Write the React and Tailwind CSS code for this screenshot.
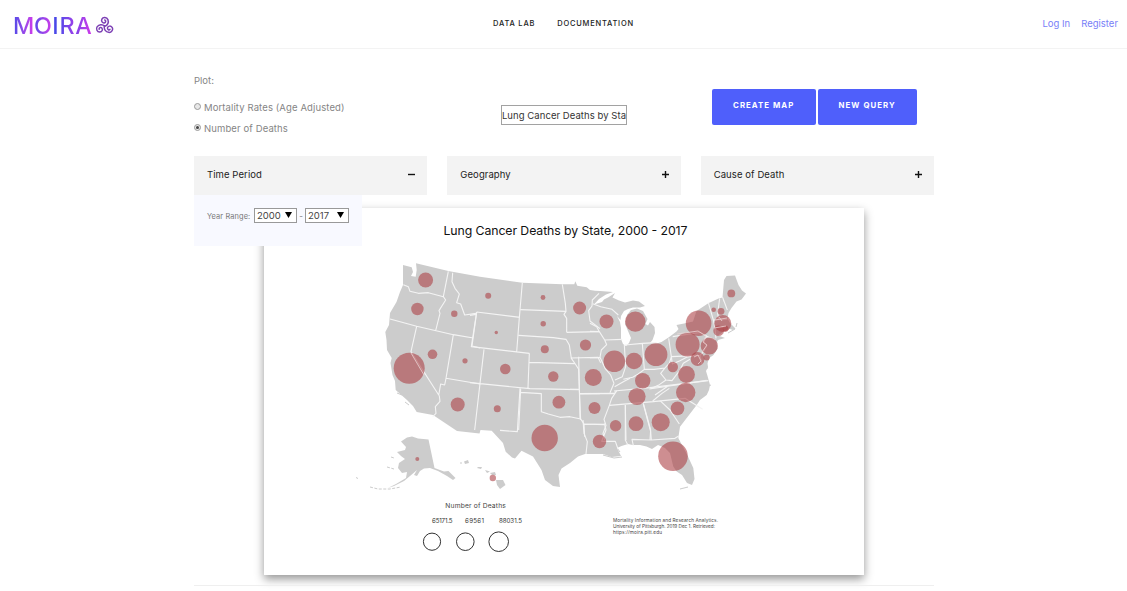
import React from "react";

const LETTERS = [
  ["M", "bg-linear-to-r from-[#4a48e8] to-[#d336ea]", "w-[21px]"],
  ["O", "bg-linear-to-r from-[#5046e8] to-[#d336ea]", "w-[18px]"],
  ["I", "bg-linear-to-r from-[#4a48e8] to-[#4a48e8]", "w-[7px]"],
  ["R", "bg-linear-to-r from-[#4a48e8] to-[#a03cea]", "w-[16px]"],
  ["A", "bg-linear-to-r from-[#7a40e8] to-[#d336ea]", "w-[17px]"],
];

const BUBBLES = [
  [425.6, 280, 7.5], [417.4, 309, 6.2], [454.3, 313.8, 3.2], [488.2, 295.8, 3],
  [409.2, 368.3, 15.5], [432.5, 354.3, 4.8], [465, 360.8, 2.6], [496.3, 332.5, 1.7],
  [505.3, 369, 5.3], [457.7, 404.5, 7], [497.3, 408.8, 3.5], [543, 297.5, 2.4],
  [543.2, 323.7, 2.7], [544.8, 349.3, 4], [553.3, 376.5, 5.2], [558.9, 402.2, 6.4],
  [544.7, 438, 13.2], [579.6, 308, 6.5], [585.5, 345, 5.6], [593.3, 377.4, 8.5],
  [594.5, 408, 6], [599.5, 441.5, 6.7], [606.5, 321.5, 7], [635.3, 321.6, 10.2],
  [614.3, 361.3, 10.8], [634, 361, 8.3], [656, 354.6, 11.4], [642.7, 380.8, 7.7],
  [637, 396.5, 8.6], [615.6, 425.8, 5.7], [636, 423.7, 7.4], [660.7, 422.2, 9],
  [673, 456.2, 14.8], [677.5, 408.4, 6.8], [685.7, 392.5, 9.7], [686.5, 374.5, 8.4],
  [672.8, 367, 5.2], [687.6, 344.4, 12], [698.6, 323.2, 12.8], [709.3, 346, 8.6],
  [697.6, 359, 6.9], [706.7, 357.6, 3], [718.6, 330.8, 5.3], [722.8, 323.6, 8.5],
  [725.5, 328.7, 3], [721, 311.3, 3.4], [713.7, 309.7, 2.3], [731.3, 293.4, 3.9],
  [417.3, 459, 2], [492.8, 478, 3.2],
];

const LEGEND = [
  [432, 541.7, 8.6, 432, 20.5, "65171.5"],
  [465.3, 541.7, 8.8, 465, 19, "69561"],
  [498.7, 541.7, 9.8, 499, 23, "88031.5"],
];

function Triskele() {
  return (
    <svg className="mb-px h-[18px] w-[19px]" viewBox="0 0 19 18" fill="none" stroke="#7c3fb4" strokeWidth="1.500" strokeLinecap="round">
      <g id="arm">
        <path d="M9.600 10.400C12.800 9.400 14 6.200 12.900 3.600C11.800 1 8 .8 6.900 3.100C5.900 5.300 7.500 7.200 9.300 6.900C11 6.500 11.200 4.300 9.700 4" />
      </g>
      <use href="#arm" transform="rotate(120 9.600 10.200)" />
      <use href="#arm" transform="rotate(240 9.600 10.200)" />
    </svg>
  );
}

function Land() {
  return (
    <g fill="#cccccc">
      <path d="M403 265L411.700 267.300L413 272L411 276L415.700 276.700L416.700 270L416 263.300L448.300 271L480 276.700L522.300 282.700L562.300 284.300L574.300 284.300L575.300 281.300L577.300 285.700L586.700 287.300L590 290L595 290.700L600 291L613 292L606 294.500L599 299L594 304.500L602 302L604 299.500L608 297.500L615 293L612.500 297.500L619 300.500L625 302.500L633 300.500L639 301.500L645 306L640 307.500L633 307.500L628 309L624 311L621 316L620.500 320L617 316L620 322L621 328L621 339L623 344L626 346L629 343L631 338L628 331L625 324L627 315L631 310L637 308.500L643 311L647.500 319L645.500 324L648 325.500L650 322L654.500 327L655 333L652.500 340L650 343L656.700 343.500L661.500 342L668.500 337.500L676.500 331.500L678.500 329L676.500 325L686.500 323L693 321.500L696.500 311L708.300 303.300L718.500 298.500L722.500 297.500L724 280L726.500 276L735 275.500L738.500 285L742 290.500L746 293.500L741.500 299.500L736.500 301.500L731.500 308L728.500 313L727.500 318.500L730 323L735.500 328.500L733 330L728.500 328.500L723 332L718 335.500L725 338L718 340L716.500 343L717.500 348.500L713.500 355L710 357.500L707 363.500L708 367L706 371L707.500 376L710 385L709 390L706.700 395L700 400L696.700 405L686.700 418L680 426.700L678.300 438L687.300 455L693.300 468L694.500 479L692 485L687 483L682 475L676.700 471.500L673.300 466.500L671.700 460L670 453L665 448L658 445L652 449L646.500 446.500L640 445L632.500 445L628 444L621.500 446L617 448L621 456L611.500 457L603 454L593 454L585 454L578 456.500L570 463L561.500 468.500L558.500 475L560 487L553 486L545 480L541.500 470L533 456.500L521.500 450.700L515 458.500L512 457.500L505.700 451.700L503 443L491.700 430.700L480.500 430L479.500 433.500L457 431L433 415L416.700 412L413 406L407 400L395.700 390L395 381L392.500 375L390.500 363L391.700 358L387 350L386.500 340L385.300 332L389 325L390 313L396.500 302L400 292L403 285Z" />
      <path d="M401 441.500L407 437.500L412 436.500L418 438.500L428.500 439.500L434.500 468L444 471.500L448.500 471L455.500 478L453 480L447 476L438 471L430 468L424 468.500L420 471L417 476L414 475L417 470L410 476L404 481L394 486L388 488L396 484L406 478L407 472L402 473L398 468L399 463L405 459L401 456L397 452L405 450L406 447Z" />
      <path d="M496 480L503 480L505.500 485L500 489L497 485ZM464 461.500L468 460L469 463L465 464ZM478 467L482 467L481 469L477 468ZM485 470L490 471.500L487 473ZM490 473L495 472L496 475L492 475Z" />
      <g fill="none" stroke="#cccccc" strokeWidth="1">
        <path d="M356.500 477L357.500 479M370 487L378 489L390 489L401 487M387 467L394 469M391 457L394 458" strokeDasharray="3 1.500" />
        <path d="M397 393L402 395M405 402L409 405M603 455L614 458L622 457M617 448L620 452M707 359L707 369M706 387L711 385M728 333L735 329M737 323L736 327M680 489L688 487M460 463L462 463" />
      </g>
    </g>
  );
}

function StateBorders() {
  return (
    <g fill="none" stroke="#f4f4f4" strokeWidth="1.100" strokeLinejoin="round">
      <g transform="translate(350 250) scale(.33333)" strokeWidth="3.300">
        <path d="M160 104L175 110L180 124L205 130L235 128L280 140M295 64L280 140L287 150L267 182L270 190L257 242M120 207L200 229L310 254L370 264M200 229L183 305L268 438L270 454L256 470L258 490L248 500M310 254L288 385L284 405L272 402L266 436M288 385L390 402M308 68L306 95L315 115L328 132L320 158L332 162L344 195L378 190M380 187L366 288L390 294" />
      </g>
      <g transform="translate(470 250) scale(.33333)" strokeWidth="3.300">
        <path d="M157 98L148 203L140 306M20 186L150 202M20 186L4 290L178 310M0 196L18 193M42 298L30 400M0 398L180 416L326 419M178 310L174 414M178 337L314 341M152 179L288 184M277 103L286 160L288 184L282 193L290 205L290 247M146 256L250 263L288 268L298 285L304 325L318 345L326 358L328 419L332 510M290 247L387 245M302 324L384 322L392 338M30 400L14 540M152 416L146 540M152 427L214 431L214 485L235 492L270 502L300 500L332 507M328 432L390 431M387 130L367 150L366 168L356 182L360 213L390 236" />
      </g>
      <g transform="translate(590 260) scale(.33333)" strokeWidth="3.300">
        <path d="M8 131L32 140L66 148L85 165M0 190L20 200L28 215L44 240L50 254L34 270L30 292L45 325L62 345L72 370M44 240L97 238M0 214L28 215M0 293L30 292M103 255L107 320L97 350L75 360M105 255L157 250L163 328L145 342L128 352L100 358M157 250L200 248M236 235L244 290L238 310L225 324L192 328L163 328M244 290L330 286M248 230L330 217L350 228L342 245L350 258L338 278L330 286L336 312M355 128L370 180L375 205L378 235M389 115L383 160L386 180M402 125L398 112L412 150M371 180L412 178M373 205L407 200M398 203L400 222M244 290L247 312L270 302L290 292L306 289M225 324L212 340L228 360L246 362L270 330L280 310L300 298M350 229L376 240M72 393L180 383L355 362M72 370L60 398M234 378L195 405" />
      </g>
      <g transform="translate(570 330) scale(.33333)" strokeWidth="3.300">
        <path d="M134 188L140 183L125 205L118 226L102 268L108 286L99 310L104 330M28 178L0 178M26 80L30 264L42 282L102 284M30 191L134 190M238 177L410 151M118 226L250 215L345 205L398 238M298 175L276 190L248 213M166 225L168 330M220 220L242 300L240 330M270 212L300 240L328 282M42 282L44 320M288 150L268 164L240 177M134 170L160 155L180 145" />
      </g>
      <g transform="translate(500 380) scale(.33333)" strokeWidth="3.300">
        <path d="M60 25L52 155L0 151M249 120L252 160L262 185L258 222M249 133L313 132M313 130L318 150L305 184L346 184L354 207M376 75L376 180L384 196M430 72L452 155L454 180L396 178L400 197M454 180L525 175L536 168" />
      </g>
    </g>
  );
}

function MapCard() {
  return (
    <div className="mt-[13px] ml-[70px] h-[367px] w-[600px] bg-white shadow-[0_4px_9px_rgba(0,0,0,0.42)]">
      <svg className="block h-[367px] w-[600px]" viewBox="264 208 600 367" fontFamily="Inter, sans-serif">
        <text x="443.500" y="235" fontSize="12.300" textLength="244" fill="#111">Lung Cancer Deaths by State, 2000 - 2017</text>
        <Land />
        <StateBorders />
        {BUBBLES.map(([x, y, r]) => (
          <circle key={`${x}-${y}`} cx={x} cy={y} r={r} fill="#aa3c41" fillOpacity="0.58" />
        ))}
        <g fill="none" stroke="#eed9da" strokeWidth="1">
          <path d="M411 353L424 375M677 334L698 331L706 336L703 342L707 345L702 352M694 357L698 355L701 361L698 364M715 320L727 318M714 328L726 326M719 317L722 321" opacity="0.750" />
        </g>
        <text x="445.300" y="508" fontSize="6.700" textLength="60.500" fill="#444">Number of Deaths</text>
        {LEGEND.map(([cx, cy, r, tx, length, label]) => (
          <g key={label}>
            <text x={tx} y="522.800" fontSize="6.200" textLength={length} fill="#333">{label}</text>
            <circle cx={cx} cy={cy} r={r} fill="none" stroke="#333" strokeWidth="1" />
          </g>
        ))}
        <g fontSize="4.700" fill="#444">
          <text x="613" y="522" textLength="105">Mortality Information and Research Analytics.</text>
          <text x="613" y="528" textLength="102">University of Pittsburgh. 2019 Dec 1. Retrieved:</text>
          <text x="613" y="534" textLength="49">https://moira.pitt.edu</text>
        </g>
      </svg>
    </div>
  );
}

function Radio({ checked, label }) {
  return (
    <label className="flex h-[21px] items-center pt-px text-[9.500px] tracking-[0.110px] text-[#858585]">
      <span className="mr-[3px] mb-[2px] flex size-[7px] items-center justify-center rounded-full border border-[#9a9a9a] bg-[#e8e8e8]">
        {checked && <span className="size-[3px] rounded-full bg-[#444]" />}
      </span>
      {label}
    </label>
  );
}

function Accordion({ title, open, children }) {
  return (
    <div className="relative h-[39px] bg-[#f3f3f3] text-[#1c1c1c]">
      <div className="flex h-[38px] items-center justify-between pr-3 pl-[13px] text-[9.500px] tracking-[0.080px]">
        <span>{title}</span>
        <svg className="mb-[2px] size-[7px]" viewBox="0 0 7 7" stroke="#111" strokeWidth="1.400">
          <path d={open ? "M0 3.500H7" : "M0 3.500H7M3.500 0V7"} />
        </svg>
      </div>
      {children}
    </div>
  );
}

function YearSelect({ year, width }) {
  return (
    <span className={`flex h-[15px] items-center justify-between border border-[#999] bg-white pr-[4px] pl-[2px] text-[9.500px] text-[#444] ${width}`}>
      {year}
      <svg className="mb-px h-[6px] w-[7px]" viewBox="0 0 7 6"><path d="M0 0H7L3.500 6Z" /></svg>
    </span>
  );
}

export default function App() {
  return (
    <div className="h-[591px] overflow-hidden bg-white font-['Inter',sans-serif] leading-none whitespace-nowrap">
      <header className="grid h-[49px] grid-cols-[1fr_auto_1fr] items-center border-b border-[#f3f3f3]">
        <div className="flex items-center pt-[3px] pl-[13px]">
          {LETTERS.map(([char, gradient, width]) => (
            <span key={char} className={`flex justify-center bg-clip-text text-[23.300px] leading-[26px] font-medium text-transparent ${gradient} ${width}`}>{char}</span>
          ))}
          <span className="w-[3px]" />
          <Triskele />
        </div>
        <nav className="flex gap-[22px] text-[7.500px] font-medium tracking-[0.780px] text-[#222]">
          <span>DATA LAB</span>
          <span>DOCUMENTATION</span>
        </nav>
        <div className="flex justify-end gap-[11px] pr-[9px] text-[9.500px] text-[#7880f8]">
          <span>Log In</span>
          <span>Register</span>
        </div>
      </header>
      <main className="ml-[194px] w-[740px]">
        <section className="grid h-[107px] grid-cols-3 gap-5">
          <div className="pt-[27px]">
            <div className="mb-[11px] text-[9.500px] text-[#858585]">Plot:</div>
            <Radio label="Mortality Rates (Age Adjusted)" />
            <Radio checked label="Number of Deaths" />
          </div>
          <div className="pt-[56px] pl-[53.600px]">
            <input className="block h-5 w-[126px] border border-[#a2a2a2] text-[9.500px] tracking-[0.060px] text-[#333]" defaultValue="Lung Cancer Deaths by State" />
          </div>
          <div className="flex gap-[2px] pt-10 pl-[11px] text-[7.800px] font-bold tracking-[1.050px] text-white">
            <button className="h-9 w-[104px] shrink-0 rounded-[2px] bg-[#4f5ffb] pb-[2px]">CREATE MAP</button>
            <button className="h-9 w-[99px] shrink-0 rounded-[2px] bg-[#4f5ffb] pb-[2px]">NEW QUERY</button>
          </div>
        </section>
        <section className="grid grid-cols-3 gap-5">
          <Accordion title="Time Period" open>
            <div className="absolute top-[39px] left-0 z-10 flex h-[51px] w-[168px] items-start bg-[#f8f9ff] pt-[13px] pl-[13px]">
              <span className="w-[47px] pt-[5px] text-[7.400px] tracking-[0.120px] text-[#777]">Year Range:</span>
              <YearSelect year="2000" width="w-[43px]" />
              <span className="w-[8px] pt-[4px] text-center text-[8px] text-[#777]">-</span>
              <YearSelect year="2017" width="w-[44px]" />
            </div>
          </Accordion>
          <Accordion title="Geography" />
          <Accordion title="Cause of Death" />
        </section>
        <MapCard />
        <hr className="mt-[10px] border-[#efefef]" />
      </main>
    </div>
  );
}
